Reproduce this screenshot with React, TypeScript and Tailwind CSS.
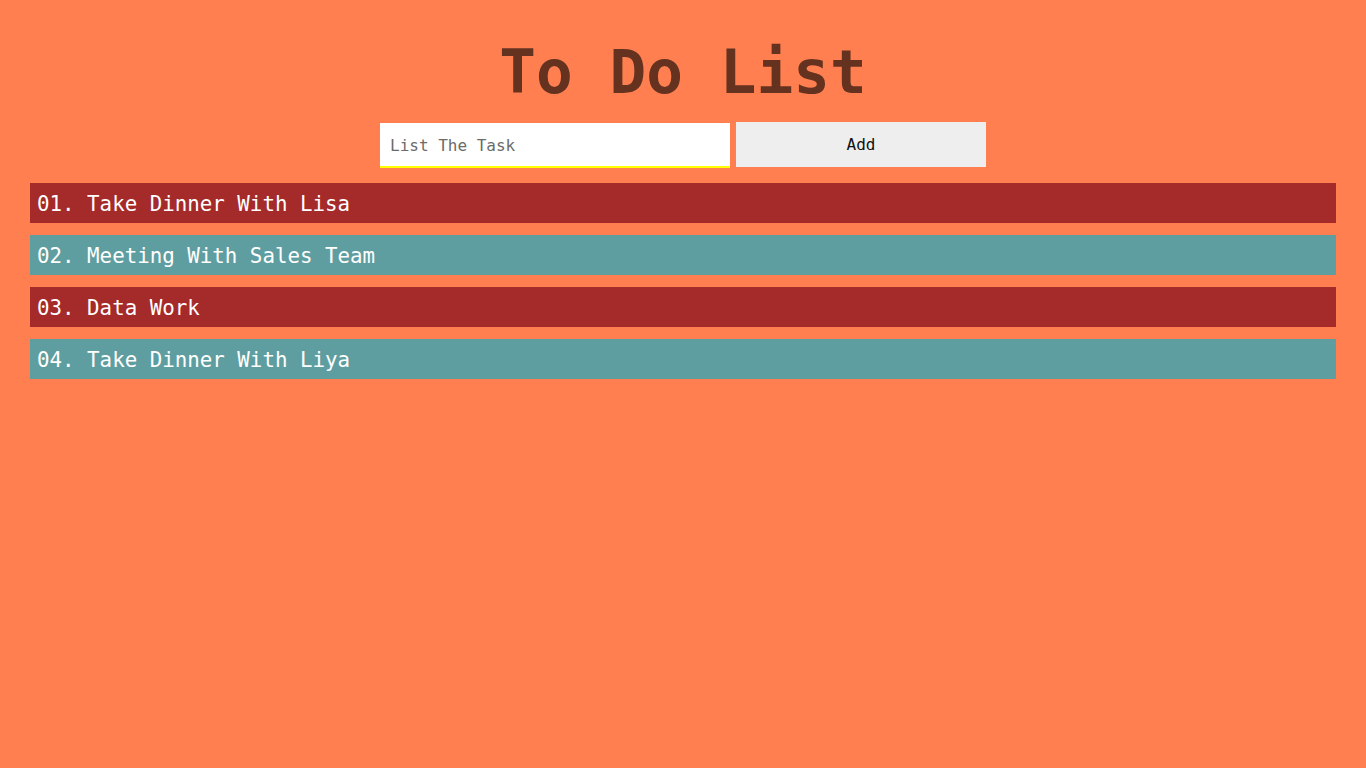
import { useState } from 'react'

const mono = "font-['DejaVu_Sans_Mono','Liberation_Mono',monospace]"

export default function App() {
  const [tasks, setTasks] = useState<string[]>([
    'Take Dinner With Lisa',
    'Meeting With Sales Team',
    'Data Work',
    'Take Dinner With Liya',
  ])
  const [text, setText] = useState('')

  const addTask = () => {
    if (!text.trim()) return
    setTasks([...tasks, text.trim()])
    setText('')
  }

  return (
    <div className={`min-h-screen w-full bg-[#ff7f50] ${mono}`}>
      <h1 className="pt-[41px] text-center text-[61px] leading-[61px] font-bold text-[#65321f]">To Do List</h1>

      <div className="mt-[20px] flex justify-center items-start gap-[6px]">
        <input
          className="mt-px h-[45px] w-[350px] bg-white border-b-2 border-[#ffff00] pl-[10px] pt-[2px] text-[16px] text-[#333] placeholder:text-[#6b6b6b] outline-none"
          placeholder="List The Task"
          value={text}
          onChange={e => setText(e.target.value)}
        />
        <button onClick={addTask} className="h-[45px] w-[250px] bg-[#eeeeee] text-[16px] text-[#111]">Add</button>
      </div>

      <div className="mt-[15px] mx-[30px] flex flex-col gap-[12px]">
        {tasks.map((t, i) => (
          <div key={i} className={`h-[40px] flex items-center px-[7px] pt-[3px] text-[20.8px] text-white ${i % 2 === 0 ? 'bg-[#a52a2a]' : 'bg-[#5f9ea0]'}`}>
            {String(i + 1).padStart(2, '0')}. {t}
          </div>
        ))}
      </div>
    </div>
  )
}
